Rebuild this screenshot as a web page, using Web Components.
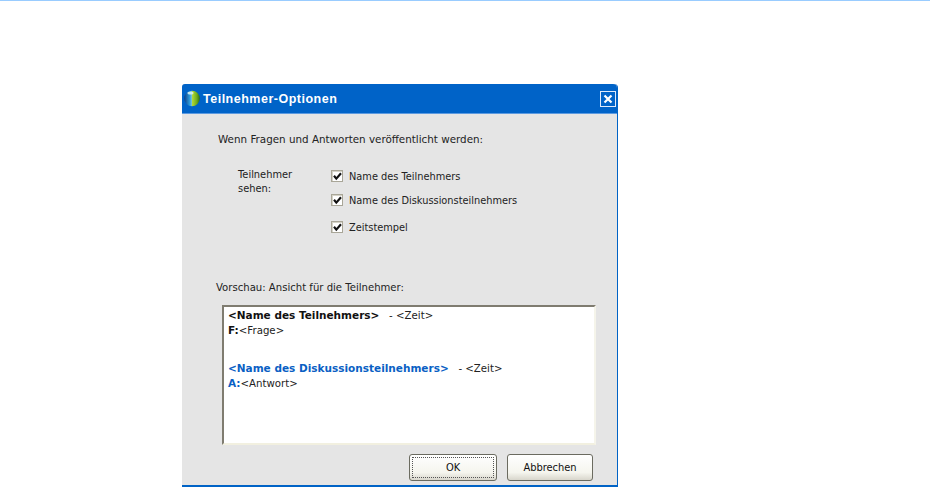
<!DOCTYPE html>
<html><head><meta charset="utf-8"><style>
html,body{margin:0;padding:0;background:#fff;height:487px;overflow:hidden}
body{font-family:"DejaVu Sans",sans-serif}
</style></head><body>
<app-page>
<option-dialog heading="Teilnehmer-Optionen">
  <check-row slot="checks" style="--h:24px">Name des Teilnehmers</check-row>
  <check-row slot="checks" style="--h:27px">Name des Diskussionsteilnehmers</check-row>
  <check-row slot="checks" style="--h:24px">Zeitstempel</check-row>
  <preview-box slot="preview"></preview-box>
  <win-button slot="buttons" focused style="--w:88px">OK</win-button>
  <win-button slot="buttons">Abbrechen</win-button>
</option-dialog>
</app-page>
<script>
function def(name, html, cls){
  customElements.define(name, class extends HTMLElement{
    constructor(){super();const r=this.attachShadow({mode:'open'});r.innerHTML=html;}
    connectedCallback(){ if(cls) cls.call(this); }
  });
}
def('app-page',`<style>:host{display:block;height:487px;box-sizing:border-box;border-top:1px solid #99ccff;padding:83px 0 0 182px}</style><slot></slot>`);
def('option-dialog',`<style>
:host{display:flex;flex-direction:column;width:436px;height:403px;box-sizing:border-box;background:#e5e5e5;border-right:1px solid #0063c6;border-bottom:2px solid #0063c6;border-radius:3px 4px 0 0;color:#222;font-size:10.2px}
.bar{height:29px;flex:none;background:#0063c8;display:flex;align-items:center;gap:2px;padding:0 1px 0 2px;border-bottom:1px solid #5c9ae0;border-radius:3px 4px 0 0}
.bar svg{flex:none}
.title{flex:1;color:#fff;font:bold 12.5px "Liberation Sans",sans-serif;letter-spacing:.5px;white-space:nowrap}
.x{flex:none;width:16px;height:16px;box-sizing:border-box;border:1px solid #dfeafb;display:flex;align-items:center;justify-content:center}
.q{padding:18px 0 0 36px;line-height:14px;white-space:nowrap;font-size:10.35px}
.who{display:flex;padding:21px 0 0 56px}
.who .l{width:93px;line-height:14px;padding-top:1px;font-size:9.85px}
.checks{display:flex;flex-direction:column;padding-top:3px}
.pv{padding:36px 0 0 34px;line-height:14px;font-size:10.1px}
.box{padding:10px 21px 0 40px}
.btns{display:flex;gap:10px;padding:9px 24px 0 0;justify-content:flex-end;font-size:9.9px}
</style>
<div class="bar"><svg width="17" height="17" viewBox="0 0 17 17"><defs><linearGradient id="b" x1="0" x2="1" y1="0" y2="0"><stop offset="0" stop-color="#0b3f8c"/><stop offset=".7" stop-color="#2f9bd8"/><stop offset="1" stop-color="#7cc8e0"/></linearGradient><linearGradient id="g" x1="0" x2="1" y1="0" y2="0"><stop offset="0" stop-color="#b6dc3a"/><stop offset=".6" stop-color="#6fae1e"/><stop offset="1" stop-color="#2f6f10"/></linearGradient></defs><path d="M8 .7A7.8 7.8 0 0 0 8 16.3Z" fill="url(#b)"/><path d="M8 .7A7.8 7.8 0 0 1 8 16.3Z" fill="url(#g)"/><ellipse cx="6.5" cy="3" rx="3" ry="1.5" fill="#dff3f0" opacity=".85"/></svg><div class="title"></div><div class="x"><svg width="10" height="10" viewBox="0 0 10 10"><path d="M1.5 1.5L8.5 8.5M8.5 1.5L1.5 8.5" stroke="#fff" stroke-width="2.2"/></svg></div></div>
<div class="q">Wenn Fragen und Antworten veröffentlicht werden:</div>
<div class="who"><div class="l">Teilnehmer<br>sehen:</div><div class="checks"><slot name="checks"></slot></div></div>
<div class="pv">Vorschau: Ansicht für die Teilnehmer:</div>
<div class="box"><slot name="preview"></slot></div>
<div class="btns"><slot name="buttons"></slot></div>`,function(){this.shadowRoot.querySelector('.title').textContent=this.getAttribute('heading');});
def('check-row',`<style>
:host{display:flex;align-items:flex-start;gap:6px;height:var(--h);white-space:nowrap;line-height:14px;font-size:9.8px}
.c{width:12px;height:12px;box-sizing:border-box;background:#fff;border:1px solid #a9a698;box-shadow:inset 1px 1px 0 #d5d3c8;display:flex;align-items:center;justify-content:center;flex:none}
</style><span class="c"><svg width="9" height="9" viewBox="0 0 9 9"><path d="M1 3.8L3.3 6.6L8 1.2" fill="none" stroke="#111" stroke-width="2.2"/></svg></span><span><slot></slot></span>`);
def('preview-box',`<style>
:host{display:block;height:140px;box-sizing:border-box;background:#fff;border:2px solid;border-color:#7f7c70 #f5f4ea #f2f0e0 #7f7c70;padding:1px 0 0 4px;line-height:15px;white-space:nowrap;color:#222}
b{color:#111;font-size:10.5px}.blue,.blue b{color:#0a5fc4}
.gap{height:23px}
</style><div><b>&lt;Name des Teilnehmers&gt;</b> &nbsp; - &lt;Zeit&gt;</div><div><b>F:</b>&lt;Frage&gt;</div><div class="gap"></div><div><b class="blue">&lt;Name des Diskussionsteilnehmers&gt;</b> &nbsp; - &lt;Zeit&gt;</div><div><b class="blue">A:</b>&lt;Antwort&gt;</div>`);
def('win-button',`<style>
:host{display:flex;align-items:center;justify-content:center;width:var(--w,86px);height:27px;box-sizing:border-box;border:1px solid #6b6b60;border-radius:3px;background:linear-gradient(#fff 0,#f5f5ee 70%,#d8d6cc 100%);color:#111;position:relative}
:host([focused]) .f{position:absolute;inset:2px;border:1px dotted #555}
</style><span class="f"></span><slot></slot>`);
</script>
</body></html>
